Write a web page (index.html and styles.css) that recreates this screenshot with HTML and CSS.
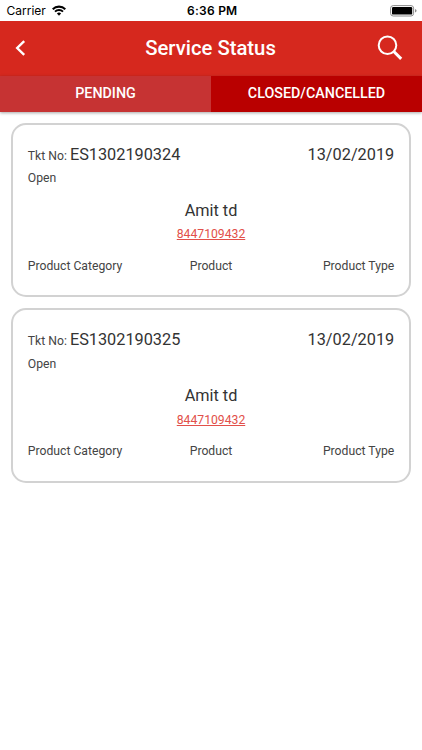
FILE: index.html
```
<!DOCTYPE html>
<html>
<head>
    <meta charset="utf-8">
    <title>Service Status</title>
    <link rel="stylesheet" href="styles.css">
</head>
<body>
    <div class="status-bar">
        <div class="carrier">
            <span>Carrier</span>
            <svg class="wifi" width="14" height="11" viewBox="0 0 14 11">
                <path d="M0.7 4.2 A8.9 8.9 0 0 1 13.3 4.2" fill="none" stroke="#000" stroke-width="2.1"/>
                <path d="M3 6.7 A5.6 5.6 0 0 1 11 6.7" fill="none" stroke="#000" stroke-width="1.9"/>
                <path d="M4.9 8.5 A3 3 0 0 1 9.1 8.5 L7 10.7 Z"/>
            </svg>
        </div>
        <span class="time">6:36 PM</span>
        <svg class="battery" width="28" height="12" viewBox="0 0 28 12">
            <rect x="0.6" y="0.6" width="23" height="10.4" rx="2.6" fill="#fff" stroke="#8c8c8c"/>
            <rect x="2" y="2" width="20.2" height="7.6" rx="1.2"/>
            <path d="M25 4 Q26.6 4.6 26.6 5.8 Q26.6 7 25 7.6 Z" fill="#8c8c8c"/>
        </svg>
    </div>

    <div class="header">
        <svg class="back" width="12" height="18" viewBox="0 0 12 18">
            <path d="M10.2 2.2 L3.2 9 L10.2 15.8" fill="none" stroke="#fff" stroke-width="2.4"/>
        </svg>
        <h1 class="title">Service Status</h1>
        <svg class="search" width="26" height="26" viewBox="0 0 26 26">
            <circle cx="10.5" cy="10.2" r="8.8" fill="none" stroke="#fff" stroke-width="2"/>
            <path d="M16.8 16.5 L24.2 23.9" stroke="#fff" stroke-width="3"/>
        </svg>
    </div>

    <div class="tabs">
        <div class="tab">PENDING</div>
        <div class="tab active">CLOSED/CANCELLED</div>
    </div>

    <div class="list">
        <div class="card">
            <div class="row ticket">
                <div>Tkt No: <span class="big">ES1302190324</span></div>
                <span class="big">13/02/2019</span>
            </div>
            <div class="state">Open</div>
            <div class="name">Amit td</div>
            <div class="phone"><a class="link" href="tel:8447109432">8447109432</a></div>
            <div class="row product">
                <span>Product Category</span>
                <span>Product</span>
                <span>Product Type</span>
            </div>
        </div>

        <div class="card">
            <div class="row ticket">
                <div>Tkt No: <span class="big">ES1302190325</span></div>
                <span class="big">13/02/2019</span>
            </div>
            <div class="state">Open</div>
            <div class="name">Amit td</div>
            <div class="phone"><a class="link" href="tel:8447109432">8447109432</a></div>
            <div class="row product">
                <span>Product Category</span>
                <span>Product</span>
                <span>Product Type</span>
            </div>
        </div>
    </div>
</body>
</html>
```
FILE: styles.css
```
* {
    box-sizing: border-box;
}

body {
    margin: 0;
    background: #fff;
    color: #444;
    font-family: Roboto, sans-serif;
    font-size: 12.2px;
}

.status-bar {
    display: grid;
    grid-template-columns: 1fr auto 1fr;
    align-items: center;
    height: 21px;
    padding: 0 4px 0 6.5px;
    color: #000;
    font-family: Inter, sans-serif;
    font-size: 12px;
}

.carrier {
    display: flex;
    align-items: center;
    gap: 6px;
}

.time {
    font-weight: 600;
    letter-spacing: 0.25px;
}

.battery {
    justify-self: end;
}

.header {
    display: flex;
    align-items: center;
    justify-content: space-between;
    height: 55px;
    padding: 0 19px 1px 14px;
    background: #d6281e;
}

.title {
    margin: 0 0 0 18px;
    color: #fff;
    font-size: 20.3px;
    font-weight: 500;
}

.tabs {
    display: flex;
    height: 36px;
    box-shadow: 0 1px 3px rgba(0, 0, 0, 0.35);
}

.tab {
    flex: 1;
    background: #c63333;
    color: #fff;
    font-size: 14.3px;
    font-weight: 500;
    line-height: 35px;
    text-align: center;
}

.tab.active {
    background: #b90000;
}

.list {
    display: flex;
    flex-direction: column;
    gap: 10.6px;
    padding: 10.6px 11px;
}

.card {
    height: 174.7px;
    padding: 19.3px 14.8px 0;
    border: 2px solid #d2d2d2;
    border-radius: 15px;
}

.row {
    display: flex;
    justify-content: space-between;
}

.ticket {
    align-items: baseline;
    line-height: 22px;
}

.big {
    color: #333;
    font-size: 16.3px;
}

.state {
    margin-top: 3.5px;
    line-height: 16px;
}

.name {
    margin-top: 14.5px;
    color: #333;
    font-size: 16.3px;
    line-height: 20px;
    text-align: center;
}

.phone {
    margin-top: 5.5px;
    line-height: 16px;
    text-align: center;
}

.link {
    color: #e2504a;
}

.product {
    display: grid;
    grid-template-columns: 1fr auto 1fr;
    margin-top: 15.5px;
    line-height: 16px;
}

.product span:last-child {
    text-align: right;
}
```
